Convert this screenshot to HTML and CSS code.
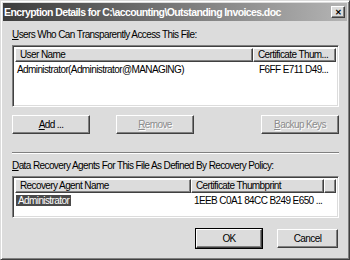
FILE: index.html
```html
<!DOCTYPE html>
<html lang="en">
  <head>
    <meta charset="UTF-8" />
    <title>Encryption Details</title>
    <link rel="stylesheet" href="styles.css">
  </head>
  <body>
    <div class="window">
      <div class="titlebar">
        <span class="title">Encryption Details for C:\accounting\Outstanding Invoices.doc</span>
        <button class="close">&#x2715;</button>
      </div>
      <div class="content">
        <div class="label"><u>U</u>sers Who Can Transparently Access This File:</div>
        <div class="listbox users">
          <div class="head">
            <div class="col name">User Name</div>
            <div class="col thumb">Certificate Thum...</div>
          </div>
          <div class="row">
            <div class="cell name">Administrator(Administrator@MANAGING)</div>
            <div class="cell thumb">F6FF E711 D49...</div>
          </div>
        </div>
        <div class="buttons">
          <button class="btn"><u>A</u>dd ...</button>
          <button class="btn disabled" disabled><u>R</u>emove</button>
          <span class="spacer"></span>
          <button class="btn disabled" disabled><u>B</u>ackup Keys</button>
        </div>
        <div class="separator"></div>
        <div class="label"><u>D</u>ata Recovery Agents For This File As Defined By Recovery Policy:</div>
        <div class="listbox agents">
          <div class="head">
            <div class="col name">Recovery Agent Name</div>
            <div class="col thumb">Certificate Thumbprint</div>
            <div class="col extra"></div>
          </div>
          <div class="row">
            <div class="cell name"><span class="selected">Administrator</span></div>
            <div class="cell thumb">1EEB C0A1 84CC B249 E650 ...</div>
          </div>
        </div>
        <div class="footer">
          <button class="btn default">OK</button>
          <button class="btn">Cancel</button>
        </div>
      </div>
    </div>
  </body>
</html>
```

FILE: styles.css
```css
:root {
  --face: #dcdcdc;
  --shadow: #808080;
  --dark: #404040;
  --light: #ffffff;
}

body {
  margin: 0;
  font-family: "Liberation Sans", Arial, sans-serif;
  font-size: 10px;
  letter-spacing: -0.6px;
  color: #000;
  background: var(--face);
}

.window {
  width: 350px;
  height: 260px;
  box-sizing: border-box;
  background: var(--face);
  border: 1px solid;
  border-color: var(--face) var(--dark) var(--dark) var(--face);
  box-shadow: inset 1px 1px 0 var(--light), inset -1px -1px 0 var(--shadow);
  padding: 2px;
  display: flex;
  flex-direction: column;
}

.titlebar {
  height: 18px;
  display: flex;
  align-items: center;
  justify-content: space-between;
  padding: 0 2px 0 1px;
  background: linear-gradient(to right, #3c3c3c, #b4b4b4);
}

.title {
  color: #fff;
  font-weight: bold;
  font-size: 10.5px;
  letter-spacing: -0.6px;
  white-space: nowrap;
}

.close {
  width: 14px;
  height: 12px;
  padding: 0;
  font-size: 8px;
  font-weight: bold;
  line-height: 9px;
  background: var(--face);
  border: 1px solid;
  border-color: var(--light) var(--dark) var(--dark) var(--light);
  box-shadow: inset -1px -1px 0 var(--shadow);
}

.content {
  padding: 7px 8px 0 9px;
  display: flex;
  flex-direction: column;
}

.label {
  height: 14px;
  line-height: 14px;
  margin-bottom: 3px;
}

.listbox {
  background: #fff;
  border: 1px solid;
  border-color: var(--shadow) var(--light) var(--light) var(--shadow);
  box-shadow: inset 1px 1px 0 var(--dark), inset -1px -1px 0 var(--face);
  padding: 2px;
  box-sizing: border-box;
}

.users {
  height: 62px;
}

.agents {
  height: 42px;
}

.head {
  display: flex;
  height: 14px;
}

.col {
  background: var(--face);
  border: 1px solid;
  border-color: var(--light) var(--dark) var(--dark) var(--light);
  box-shadow: inset -1px -1px 0 var(--shadow);
  box-sizing: border-box;
  padding-left: 4px;
  line-height: 12px;
  white-space: nowrap;
  overflow: hidden;
}

.users .name { width: 238px; }
.users .thumb { flex: 1; }
.agents .name { width: 176px; }
.agents .thumb { width: 133px; }
.agents .extra { flex: 1; }

.row {
  display: flex;
  height: 13px;
  line-height: 13px;
  margin-top: 1px;
}

.cell {
  white-space: nowrap;
  padding-left: 2px;
}

.users .cell.thumb { padding-left: 4px; }
.agents .cell.thumb { padding-left: 1px; }

.selected {
  background: #4a4a4a;
  color: #fff;
  padding: 0 2px;
  margin-left: -1px;
}

.buttons {
  display: flex;
  gap: 26px;
  margin-top: 8px;
}

.spacer { flex: 1; }

.btn {
  font-family: inherit;
  font-size: 10px;
  letter-spacing: -0.6px;
  width: 78px;
  height: 19px;
  padding: 0;
  background: var(--face);
  border: 1px solid;
  border-color: var(--light) var(--dark) var(--dark) var(--light);
  box-shadow: inset -1px -1px 0 var(--shadow);
  color: #000;
}

.btn.disabled {
  color: #8c8c8c;
  text-shadow: 1px 1px 0 var(--light);
}

.separator {
  height: 0;
  border-top: 1px solid var(--shadow);
  border-bottom: 1px solid var(--light);
  margin: 18px 0 5px;
}

.footer {
  display: flex;
  justify-content: flex-end;
  gap: 15px;
  margin-top: 11px;
  padding-right: 1px;
}

.footer .btn { width: 61px; }

.btn.default {
  width: 66px;
  outline: 1px solid #000;
}
```
